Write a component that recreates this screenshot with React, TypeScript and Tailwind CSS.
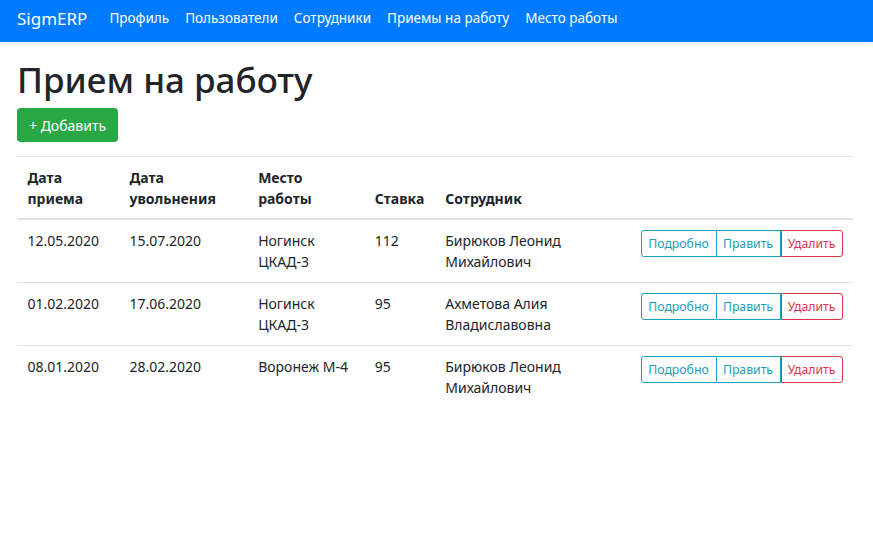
const rows = [
  { start: '12.05.2020', end: '15.07.2020', place: ['Ногинск', 'ЦКАД-3'], rate: '112', name: ['Бирюков Леонид', 'Михайлович'] },
  { start: '01.02.2020', end: '17.06.2020', place: ['Ногинск', 'ЦКАД-3'], rate: '95', name: ['Ахметова Алия', 'Владиславовна'] },
  { start: '08.01.2020', end: '28.02.2020', place: ['Воронеж М-4'], rate: '95', name: ['Бирюков Леонид', 'Михайлович'] },
];

const links = ['Профиль', 'Пользователи', 'Сотрудники', 'Приемы на работу', 'Место работы'];

export default function App() {
  return (
    <div className="min-h-[538px] bg-white text-[#212529] font-['Noto_Sans',sans-serif] text-[14px] leading-[21px]">
      {/* Navbar */}
      <nav className="h-[42px] bg-[#007bff] flex items-center px-[17px] pb-[6px] shadow-[0_1px_3px_rgba(0,123,255,0.12)]">
        <span className="text-white text-[17px] mr-[14px]">SigmERP</span>
        <div className="flex">
          {links.map((l) => (
            <a key={l} className="text-white px-[8px] text-[13.5px]">
              {l}
            </a>
          ))}
        </div>
      </nav>

      <main className="pl-[17px] pr-[20px] pt-[17px]">
        <h1 className="text-[35px] leading-[42px] font-medium mb-[7px]">Прием на работу</h1>
        <div className="mb-[14px]">
          <button className="h-[34px] px-[12px] bg-[#28a745] text-white rounded-[4px] text-[14px]">+ Добавить</button>
        </div>

        {/* Table */}
        <table className="w-full border-collapse">
          <thead>
            <tr className="border-t border-[#dee2e6] border-b-2 text-left align-bottom">
              <th className="w-[102px] px-[10.5px] py-[9.5px] font-bold">Дата<br />приема</th>
              <th className="w-[129px] px-[10.5px] py-[9.5px] font-bold">Дата<br />увольнения</th>
              <th className="w-[117px] px-[10.5px] py-[9.5px] font-bold">Место<br />работы</th>
              <th className="w-[69px] px-[10.5px] py-[9.5px] font-bold">Ставка</th>
              <th className="w-[196px] px-[10.5px] py-[9.5px] font-bold">Сотрудник</th>
              <th className="px-[10.5px] py-[9.5px]"></th>
            </tr>
          </thead>
          <tbody>
            {rows.map((r, i) => (
              <tr key={i} className="border-t border-[#dee2e6] align-top">
                <td className="px-[10.5px] py-[10px]">{r.start}</td>
                <td className="px-[10.5px] py-[10px]">{r.end}</td>
                <td className="px-[10.5px] py-[10px]">
                  {r.place.map((p) => (
                    <div key={p}>{p}</div>
                  ))}
                </td>
                <td className="px-[10.5px] py-[10px]">{r.rate}</td>
                <td className="px-[10.5px] py-[10px]">
                  {r.name.map((p) => (
                    <div key={p}>{p}</div>
                  ))}
                </td>
                <td className="px-[10.5px] py-[10px]">
                  <div className="flex justify-end text-[12.25px] leading-[18px]">
                    <button className="h-[27px] w-[76px] border border-[#17a2b8] text-[#17a2b8] rounded-l-[3px]">Подробно</button>
                    <button className="h-[27px] w-[64px] border border-l-0 border-[#17a2b8] text-[#17a2b8]">Править</button>
                    <button className="h-[27px] w-[62px] border border-[#dc3545] text-[#dc3545] rounded-r-[3px]">Удалить</button>
                  </div>
                </td>
              </tr>
            ))}
          </tbody>
        </table>
      </main>
    </div>
  );
}
